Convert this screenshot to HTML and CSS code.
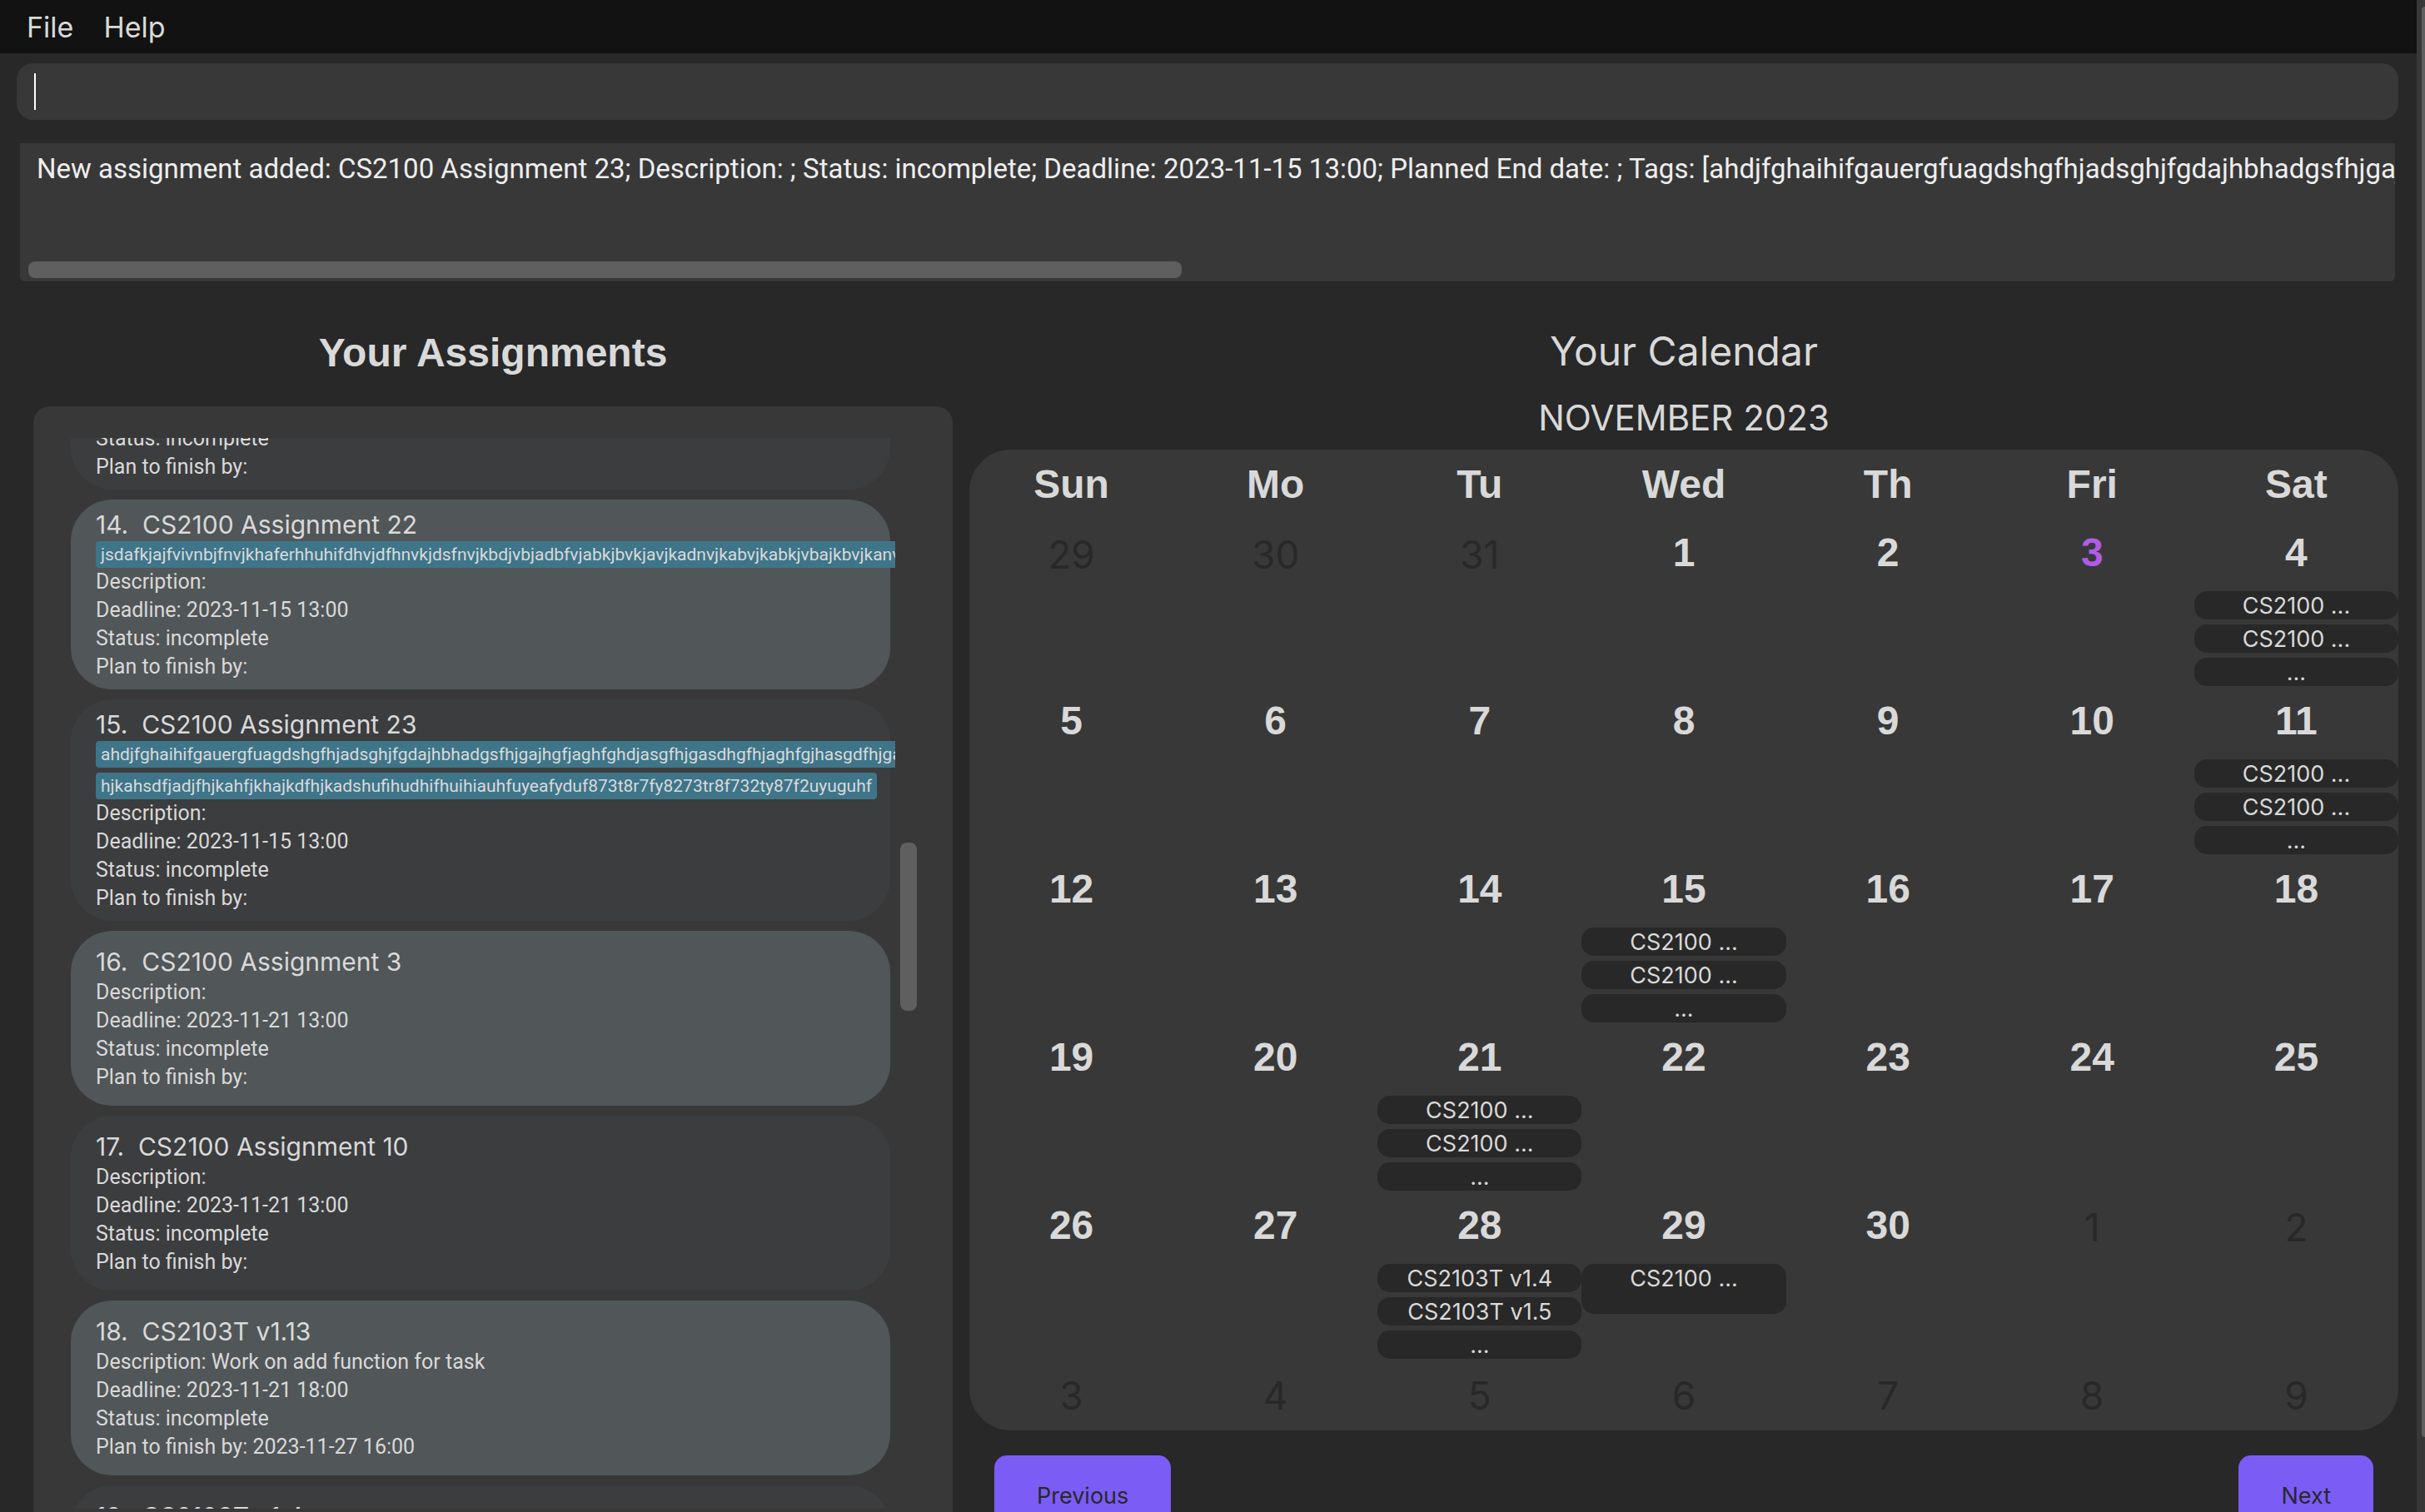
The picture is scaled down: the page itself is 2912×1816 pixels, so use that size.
FILE: index.html
```html
<!DOCTYPE html>
<html lang="en">
<head>
<meta charset="utf-8">
<title>Assignment Planner</title>
<link rel="stylesheet" href="styles.css">
</head>
<body>
<div class="window">
  <div class="app">
    <nav class="menu-bar" aria-label="Main menu">
      <button type="button" class="menu">File</button>
      <button type="button" class="menu">Help</button>
    </nav>

    <div class="command-box">
      <input type="text" class="command-input" aria-label="Command">
    </div>

    <div class="result">
      <textarea class="result-text" aria-label="Result" wrap="off" readonly>New assignment added: CS2100 Assignment 23; Description: ; Status: incomplete; Deadline: 2023-11-15 13:00; Planned End date: ; Tags: [ahdjfghaihifgauergfuagdshgfhjadsghjfgdajhbhadgsfhjgajhgfjaghfghdjasgfhjgasdhgfhjaghfgjhasgdfhjga</textarea>
      <div class="result-scroll"><div class="thumb"></div></div>
    </div>

    <main class="main">
      <section class="assignments">
        <h2 class="heading heading-bold">Your Assignments</h2>
        <div class="panel">
          <ul class="cards">
            <li class="card card-cut">
              <p class="line">Status: incomplete</p>
              <p class="line">Plan to finish by:</p>
            </li>
            <li class="card card-light">
              <h3 class="title">14.&nbsp; CS2100 Assignment 22</h3>
              <div class="tags">
                <span class="tag">jsdafkjajfvivnbjfnvjkhaferhhuhifdhvjdfhnvkjdsfnvjkbdjvbjadbfvjabkjbvkjavjkadnvjkabvjkabkjvbajkbvjkanvjkd</span>
              </div>
              <p class="line">Description:</p>
              <p class="line">Deadline: 2023-11-15 13:00</p>
              <p class="line">Status: incomplete</p>
              <p class="line">Plan to finish by:</p>
            </li>
            <li class="card">
              <h3 class="title">15.&nbsp; CS2100 Assignment 23</h3>
              <div class="tags">
                <span class="tag">ahdjfghaihifgauergfuagdshgfhjadsghjfgdajhbhadgsfhjgajhgfjaghfghdjasgfhjgasdhgfhjaghfgjhasgdfhjgasd</span>
                <span class="tag">hjkahsdfjadjfhjkahfjkhajkdfhjkadshufihudhifhuihiauhfuyeafyduf873t8r7fy8273tr8f732ty87f2uyuguhf</span>
              </div>
              <p class="line">Description:</p>
              <p class="line">Deadline: 2023-11-15 13:00</p>
              <p class="line">Status: incomplete</p>
              <p class="line">Plan to finish by:</p>
            </li>
            <li class="card card-light">
              <h3 class="title">16.&nbsp; CS2100 Assignment 3</h3>
              <p class="line">Description:</p>
              <p class="line">Deadline: 2023-11-21 13:00</p>
              <p class="line">Status: incomplete</p>
              <p class="line">Plan to finish by:</p>
            </li>
            <li class="card">
              <h3 class="title">17.&nbsp; CS2100 Assignment 10</h3>
              <p class="line">Description:</p>
              <p class="line">Deadline: 2023-11-21 13:00</p>
              <p class="line">Status: incomplete</p>
              <p class="line">Plan to finish by:</p>
            </li>
            <li class="card card-light">
              <h3 class="title">18.&nbsp; CS2103T v1.13</h3>
              <p class="line">Description: Work on add function for task</p>
              <p class="line">Deadline: 2023-11-21 18:00</p>
              <p class="line">Status: incomplete</p>
              <p class="line">Plan to finish by: 2023-11-27 16:00</p>
            </li>
            <li class="card card-last">
              <h3 class="title">19.&nbsp; CS2103T v1.4</h3>
            </li>
          </ul>
          <div class="list-scroll"><div class="thumb"></div></div>
        </div>
      </section>

      <section class="calendar">
        <h2 class="heading">Your Calendar</h2>
        <p class="month">NOVEMBER 2023</p>
        <div class="month-panel">
          <table class="days">
            <thead>
              <tr><th>Sun</th><th>Mo</th><th>Tu</th><th>Wed</th><th>Th</th><th>Fri</th><th>Sat</th></tr>
            </thead>
            <tbody>
              <tr>
                <td><span class="day other">29</span></td>
                <td><span class="day other">30</span></td>
                <td><span class="day other">31</span></td>
                <td><span class="day">1</span></td>
                <td><span class="day">2</span></td>
                <td><span class="day today">3</span></td>
                <td><span class="day">4</span>
                  <ul class="events"><li class="event">CS2100 ...</li><li class="event">CS2100 ...</li><li class="event">...</li></ul></td>
              </tr>
              <tr>
                <td><span class="day">5</span></td>
                <td><span class="day">6</span></td>
                <td><span class="day">7</span></td>
                <td><span class="day">8</span></td>
                <td><span class="day">9</span></td>
                <td><span class="day">10</span></td>
                <td><span class="day">11</span>
                  <ul class="events"><li class="event">CS2100 ...</li><li class="event">CS2100 ...</li><li class="event">...</li></ul></td>
              </tr>
              <tr>
                <td><span class="day">12</span></td>
                <td><span class="day">13</span></td>
                <td><span class="day">14</span></td>
                <td><span class="day">15</span>
                  <ul class="events"><li class="event">CS2100 ...</li><li class="event">CS2100 ...</li><li class="event">...</li></ul></td>
                <td><span class="day">16</span></td>
                <td><span class="day">17</span></td>
                <td><span class="day">18</span></td>
              </tr>
              <tr>
                <td><span class="day">19</span></td>
                <td><span class="day">20</span></td>
                <td><span class="day">21</span>
                  <ul class="events"><li class="event">CS2100 ...</li><li class="event">CS2100 ...</li><li class="event">...</li></ul></td>
                <td><span class="day">22</span></td>
                <td><span class="day">23</span></td>
                <td><span class="day">24</span></td>
                <td><span class="day">25</span></td>
              </tr>
              <tr>
                <td><span class="day">26</span></td>
                <td><span class="day">27</span></td>
                <td><span class="day">28</span>
                  <ul class="events"><li class="event">CS2103T v1.4</li><li class="event">CS2103T v1.5</li><li class="event">...</li></ul></td>
                <td><span class="day">29</span>
                  <ul class="events"><li class="event event-single">CS2100 ...</li></ul></td>
                <td><span class="day">30</span></td>
                <td><span class="day other">1</span></td>
                <td><span class="day other">2</span></td>
              </tr>
              <tr>
                <td><span class="day other">3</span></td>
                <td><span class="day other">4</span></td>
                <td><span class="day other">5</span></td>
                <td><span class="day other">6</span></td>
                <td><span class="day other">7</span></td>
                <td><span class="day other">8</span></td>
                <td><span class="day other">9</span></td>
              </tr>
            </tbody>
          </table>
        </div>
        <div class="pager">
          <button type="button" class="page-button">Previous</button>
          <button type="button" class="page-button">Next</button>
        </div>
      </section>
    </main>
  </div>
  <div class="window-scroll"><div class="thumb"></div></div>
</div>
</body>
</html>
```
FILE: styles.css
```css
* {
  box-sizing: border-box;
}

body,
h2,
h3,
p,
ul {
  margin: 0;
  padding: 0;
}

ul {
  list-style: none;
}

body {
  background: #282828;
  color: #d9d9d9;
  font-family: Inter, "Liberation Sans", sans-serif;
}

button,
input,
textarea {
  border: 0;
  font: inherit;
  outline: 0;
}

.window {
  display: flex;
  height: 100vh;
  overflow: hidden;
}

.app {
  display: flex;
  flex: 1;
  flex-direction: column;
  min-width: 0;
}

.thumb {
  background: #5f5f5f;
  border-radius: 8px;
}

/* Window scroll bar */
.window-scroll {
  background: #383838;
  display: grid;
  grid-template-rows: 8px 19fr 1fr;
  padding-left: 6px;
  width: 10px;
}

.window-scroll .thumb {
  border-radius: 4px 0 0 4px;
  grid-row: 2;
}

/* Menu bar */
.menu-bar {
  background: #121212;
  display: flex;
  flex: none;
  height: 64px;
  padding-left: 14px;
}

.menu {
  background: none;
  color: #d9d9d9;
  font-size: 34px;
  padding: 0 18px;
}

/* Command box */
.command-box {
  background: #383838;
  border-radius: 20px;
  flex: none;
  height: 68px;
  margin: 12px 22px 28px 20px;
  position: relative;
}

.command-box::before {
  background: #fff;
  content: "";
  height: 44px;
  left: 21px;
  position: absolute;
  top: 12px;
  width: 2px;
}

.command-input {
  background: none;
  color: #fff;
  font-size: 34px;
  height: 100%;
  padding: 0 22px;
  width: 100%;
}

/* Result box */
.result {
  background: #383838;
  border-radius: 0 0 6px 6px;
  flex: none;
  height: 166px;
  margin: 0 26px 0 24px;
}

.result-text {
  background: none;
  color: #eee;
  display: block;
  font-family: Roboto, "Liberation Sans", sans-serif;
  font-size: 33px;
  height: 142px;
  line-height: 38px;
  overflow: hidden;
  padding: 12px 0 0 20px;
  resize: none;
  width: 100%;
}

.result-scroll {
  display: grid;
  grid-template-columns: 1385fr 1447fr;
  height: 20px;
  padding: 0 10px;
}

/* Two columns */
.main {
  display: grid;
  flex: 1;
  gap: 20px;
  grid-template-columns: minmax(0, 92fr) minmax(0, 143fr);
  grid-template-rows: minmax(0, 1fr);
  min-height: 0;
  padding: 50px 22px 0 40px;
}

.heading {
  font-size: 48px;
  font-weight: 400;
  line-height: 68px;
  text-align: center;
}

.heading-bold {
  font-family: "Liberation Sans", Arial, sans-serif;
  font-size: 48px;
  font-weight: 700;
  line-height: 72px;
}

/* Assignment list */
.assignments {
  display: flex;
  flex-direction: column;
  gap: 28px;
}

.panel {
  background: #383838;
  border-radius: 20px 20px 0 0;
  display: flex;
  flex: 1;
  gap: 6px;
  min-height: 0;
  padding: 38px 43px 4px 45px;
}

.cards {
  display: flex;
  flex: 1;
  flex-direction: column;
  gap: 12px;
  min-width: 0;
  overflow: hidden;
  padding-right: 6px;
}

.card {
  background: #3c3d3f;
  border-radius: 50px;
  display: flex;
  flex: none;
  flex-direction: column;
  justify-content: center;
  min-height: 210px;
  padding: 10px 0 10px 30px;
}

.card-light {
  background: #515658;
}

.card-cut {
  border-radius: 0 0 50px 50px;
  margin-top: -16px;
  min-height: 0;
  padding-top: 0;
}

.card-last {
  justify-content: flex-start;
  padding-top: 17px;
}

.title {
  font-size: 30px;
  font-weight: 400;
  line-height: 40px;
}

.line {
  font-family: Roboto, "Liberation Sans", sans-serif;
  font-size: 25px;
  line-height: 34px;
}

.tags {
  align-items: flex-start;
  display: flex;
  flex-direction: column;
  gap: 6px;
}

.tag {
  background: #3e7589;
  border-radius: 4px;
  font-family: Roboto, "Liberation Sans", sans-serif;
  font-size: 21px;
  line-height: 32px;
  padding: 0 6px;
  white-space: nowrap;
}

.list-scroll {
  display: grid;
  flex: none;
  grid-template-rows: 486fr 202fr 598fr;
  width: 20px;
}

.list-scroll .thumb {
  grid-row: 2;
}

/* Calendar */
.month {
  font-size: 42px;
  line-height: 60px;
  margin: 16px 0 8px;
  text-align: center;
}

.month-panel {
  background: #383838;
  border-radius: 50px;
}

.days {
  border-collapse: collapse;
  table-layout: fixed;
  width: 100%;
}

.days th,
.days td {
  padding: 0;
  text-align: center;
  vertical-align: top;
}

.days th,
.day {
  font-family: "Liberation Sans", Arial, sans-serif;
  font-size: 48px;
  font-weight: 700;
  line-height: 84px;
}

.days tr {
  height: 202px;
}

.days thead tr,
.days tr:last-child {
  height: 84px;
}

.day {
  display: block;
  line-height: 80px;
}

.today {
  color: #b05ce6;
}

.other {
  color: #282828;
  font-family: Inter, "Liberation Sans", sans-serif;
  font-size: 46px;
  font-weight: 400;
  line-height: 84px;
}

.events {
  display: flex;
  flex-direction: column;
  gap: 6px;
  padding-top: 6px;
}

.event {
  background: #282828;
  border-radius: 15px;
  font-size: 27px;
  height: 34px;
  line-height: 36px;
}

.event-single {
  height: 60px;
}

.pager {
  display: flex;
  justify-content: space-between;
  padding: 30px;
}

.page-button {
  background: #7b5cf5;
  border-radius: 15px;
  color: #282828;
  font-size: 27px;
  height: 96px;
  padding: 0 51px;
}
```
